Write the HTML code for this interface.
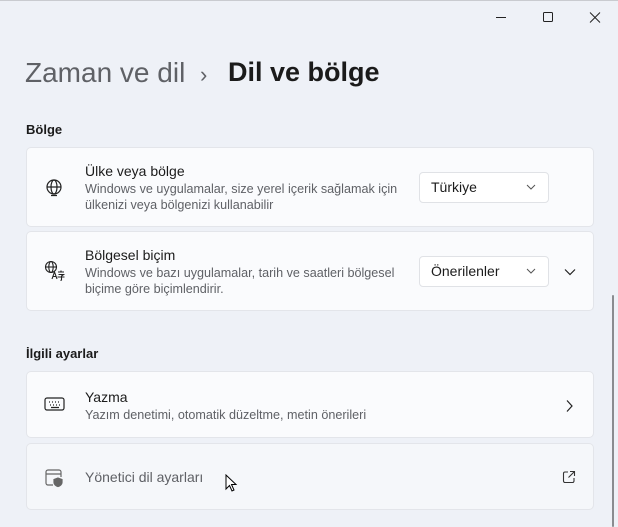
<!DOCTYPE html>
<html><head><meta charset="utf-8"><style>
html,body{margin:0;padding:0;width:618px;height:527px;overflow:hidden;background:#eef1f7;font-family:"Segoe UI","Liberation Sans",sans-serif;color:#1b1b1b;position:relative}
.abs{position:absolute}
.card{position:absolute;left:26px;width:568px;background:#fafbfd;border:1px solid #e3e5ea;border-radius:5px;box-sizing:border-box}
.t{position:absolute;font-size:14px;color:#1b1b1b}
.s{position:absolute;font-size:12.6px;color:#5f6166;line-height:16px;white-space:nowrap}
.dd{position:absolute;left:392px;width:130px;height:31px;background:#fff;border:1px solid #e0e2e6;border-radius:4px;box-sizing:border-box;font-size:14px;padding:6px 0 0 11px}
</style></head><body>
<div class="abs" style="left:0;top:0;width:618px;height:1px;background:#c9cbd0"></div>
<svg class="abs" style="left:490px;top:10px" width="120" height="16">
<path d="M6 7.5H16" stroke="#222" stroke-width="1"/>
<rect x="53.5" y="2.5" width="9" height="9" rx="1" fill="none" stroke="#222"/>
<path d="M100 2.5L110 12.5M110 2.5L100 12.5" stroke="#222"/>
</svg>
<div class="abs" style="left:25px;top:57px;font-size:28px;color:#5f6166">Zaman ve dil</div>
<div class="abs" style="left:200px;top:62px;font-size:22px;color:#5f6166">›</div>
<div class="abs" style="left:228px;top:57px;font-size:27px;font-weight:600;color:#1b1b1b">Dil ve bölge</div>
<div class="abs" style="left:26px;top:122px;font-size:13px;font-weight:600">Bölge</div>

<div class="card" style="top:147px;height:80px">
<svg class="abs" style="left:17px;top:30px" width="20" height="20" viewBox="0 0 20 20" fill="none" stroke="#222" stroke-width="1.2"><circle cx="10" cy="9" r="7"/><ellipse cx="10" cy="9" rx="3" ry="7"/><path d="M3 9H17M7 17.5h6"/></svg>
<div class="t" style="left:58px;top:15px">Ülke veya bölge</div>
<div class="s" style="left:58px;top:33px">Windows ve uygulamalar, size yerel içerik sağlamak için<br>ülkenizi veya bölgenizi kullanabilir</div>
<div class="dd" style="top:24px">Türkiye<svg style="position:absolute;right:12px;top:11px" width="10" height="6"><path d="M1 1l4 4 4-4" fill="none" stroke="#555"/></svg></div>
</div>

<div class="card" style="top:231px;height:80px">
<svg class="abs" style="left:17px;top:28px" width="22" height="22" viewBox="0 0 22 22" fill="none" stroke="#222" stroke-width="1.1"><circle cx="7" cy="7" r="5.5"/><ellipse cx="7" cy="7" rx="2.2" ry="5.5"/><path d="M1.5 7H12.5"/><path d="M8 19l2.5-7 2.5 7M9 16.5h3"/><path d="M14 12h6M17 10.5v1.5M14.5 14.5h5l-2 1.5v4l-1 .5M13.5 17h7"/></svg>
<div class="t" style="left:58px;top:15px">Bölgesel biçim</div>
<div class="s" style="left:58px;top:33px">Windows ve bazı uygulamalar, tarih ve saatleri bölgesel<br>biçime göre biçimlendirir.</div>
<div class="dd" style="top:24px">Önerilenler<svg style="position:absolute;right:12px;top:11px" width="10" height="6"><path d="M1 1l4 4 4-4" fill="none" stroke="#555"/></svg></div>
<svg class="abs" style="left:537px;top:35px" width="12" height="10"><path d="M1 2.5L6 7.5L11 2.5" fill="none" stroke="#222" stroke-width="1.2"/></svg>
</div>

<div class="abs" style="left:26px;top:346px;font-size:13px;font-weight:600">İlgili ayarlar</div>

<div class="card" style="top:371px;height:67px">
<svg class="abs" style="left:17px;top:24px" width="22" height="16" viewBox="0 0 22 16" fill="none" stroke="#222" stroke-width="1.2"><rect x="1" y="2" width="19" height="12" rx="2"/><path d="M5 6h1M8 6h1M11 6h1M14 6h1M6 9h1M9 9h1M12 9h1M15 9h1M7 11.5h8"/></svg>
<div class="t" style="left:58px;top:17px">Yazma</div>
<div class="s" style="left:58px;top:35px">Yazım denetimi, otomatik düzeltme, metin önerileri</div>
<svg class="abs" style="left:537px;top:27px" width="10" height="14"><path d="M3 1.5L8 7L3 12.5" fill="none" stroke="#222" stroke-width="1.2"/></svg>
</div>

<div class="card" style="top:443px;height:67px;background:#f5f7fa">
<svg class="abs" style="left:17px;top:24px" width="20" height="20" viewBox="0 0 20 20" fill="none" stroke="#666" stroke-width="1.2"><path d="M9 17H4a2 2 0 0 1-2-2V4a2 2 0 0 1 2-2h11a2 2 0 0 1 2 2v5M2 6h15"/><path d="M14 10l4 1.5v3c0 2-2 3.5-4 4-2-.5-4-2-4-4v-3z" fill="#666"/></svg>
<div class="t" style="left:58px;top:25px;color:#5f6166">Yönetici dil ayarları</div>
<svg class="abs" style="left:535px;top:26px" width="14" height="14" viewBox="0 0 14 14" fill="none" stroke="#333" stroke-width="1.1"><path d="M6 2H3a1.5 1.5 0 0 0-1.5 1.5v7.5A1.5 1.5 0 0 0 3 12.5h7.5A1.5 1.5 0 0 0 12 11V8M8 1.5h4.5V6M12.5 1.5L6.5 7.5"/></svg>
</div>

<svg class="abs" style="left:225px;top:474px" width="14" height="20" viewBox="0 0 14 20"><path d="M1 1V15L4.5 11.5L7 17L9 16L6.5 10.5H11Z" fill="#fff" stroke="#000" stroke-width="1"/></svg>
<div class="abs" style="left:612px;top:295px;width:2px;height:232px;background:#8a8c90;border-radius:1px"></div>
</body></html>
